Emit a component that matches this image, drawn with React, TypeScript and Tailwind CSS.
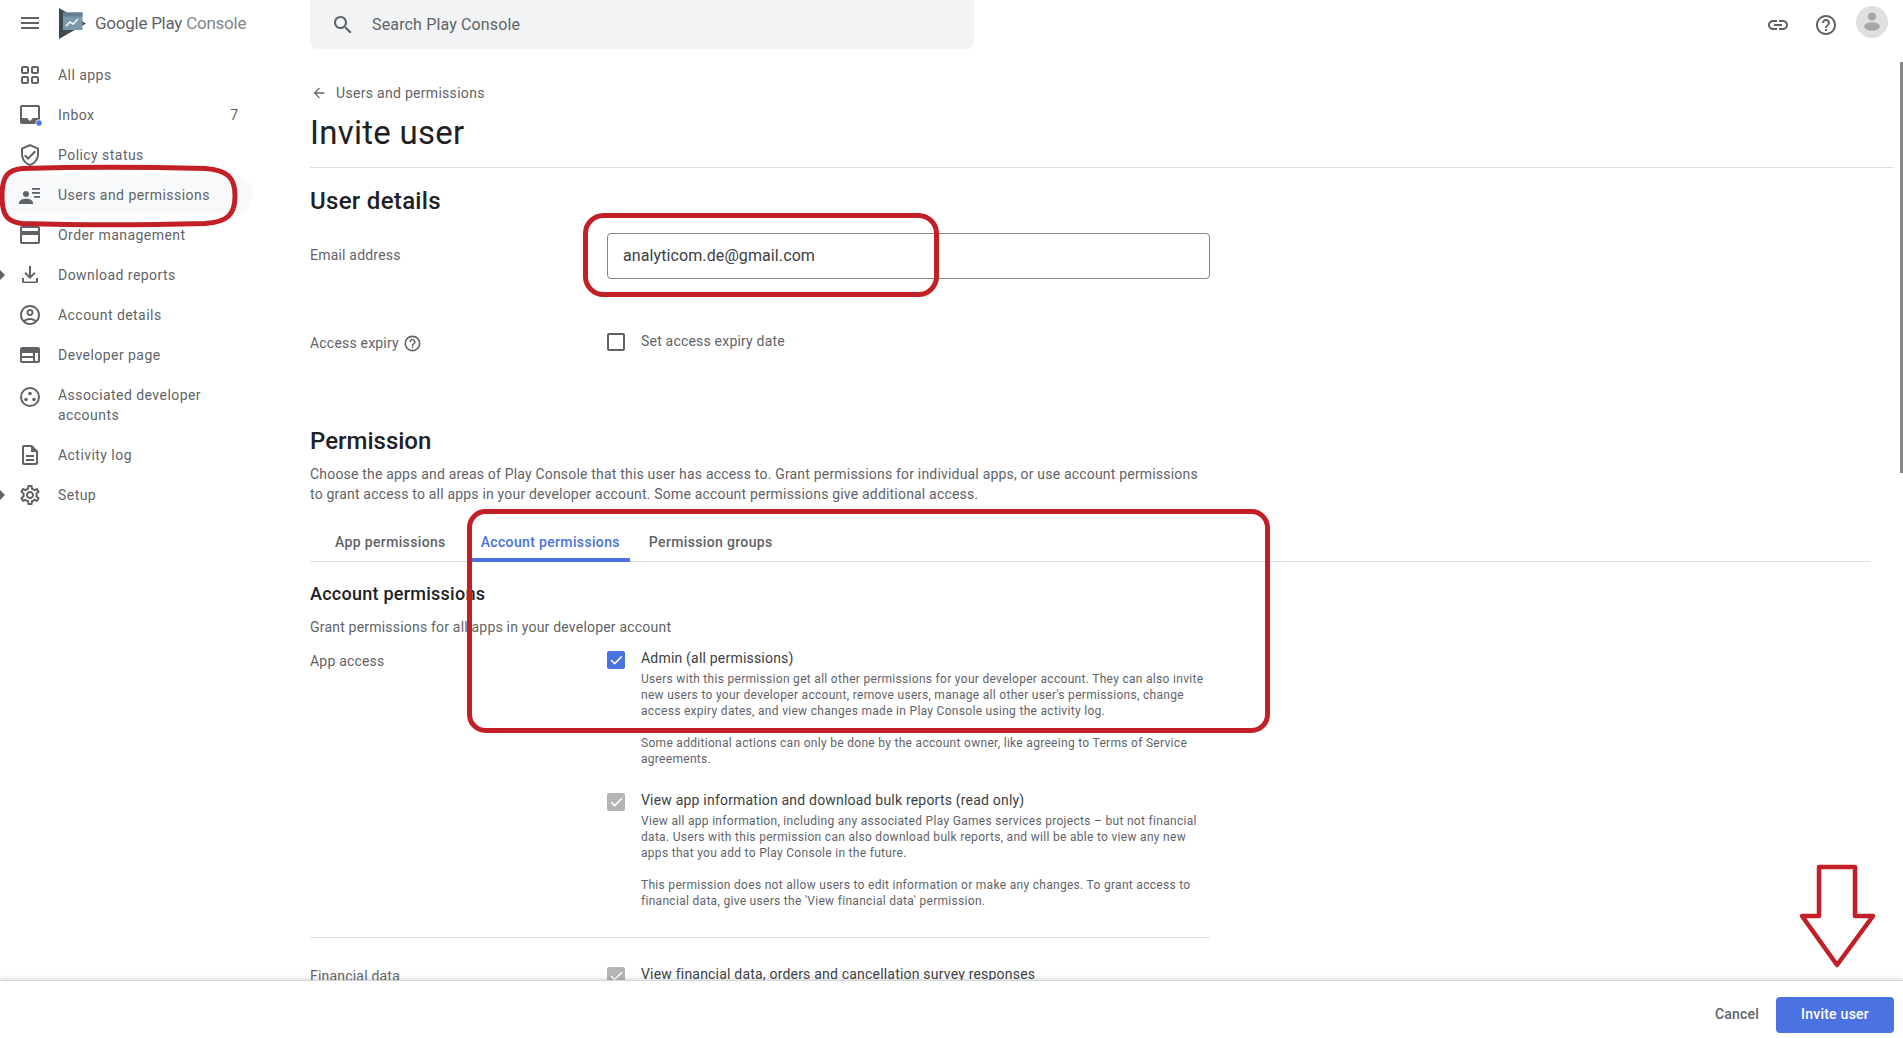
import React from "react";
import { Check } from "lucide-react";

interface NavItem {
  label: React.ReactNode;
  icon: React.ReactNode;
  badge?: string;
  active?: boolean;
  expand?: boolean;
  tall?: boolean;
}

const Icon: React.FC<{ d: string; className?: string }> = ({ d, className }) => (
  <svg viewBox="0 0 24 24" className={className ?? "size-6"} fill="currentColor" aria-hidden="true">
    <path d={d} fillRule="evenodd" />
  </svg>
);

const NAV: NavItem[] = [
  {
    label: "All apps",
    icon: (
      <svg viewBox="0 0 24 24" className="size-6" fill="none" stroke="currentColor" strokeWidth="2" aria-hidden="true">
        <rect x="4" y="4" width="6" height="6" rx="1" />
        <rect x="14" y="4" width="6" height="6" rx="1" />
        <rect x="4" y="14" width="6" height="6" rx="1" />
        <rect x="14" y="14" width="6" height="6" rx="1" />
      </svg>
    ),
  },
  {
    label: "Inbox",
    badge: "7",
    icon: (
      <svg viewBox="0 0 24 24" className="size-6" aria-hidden="true">
        <path fill="currentColor" fillRule="evenodd" d="M20 2H4a2 2 0 00-2 2v15a2 2 0 002 2h16a2 2 0 002-2V4a2 2 0 00-2-2zm0 2v11h-5l-3 3-3-3H4V4h16z" />
        <circle cx="21" cy="20" r="3.2" fill="#4a72e0" stroke="#fff" strokeWidth="0.8" />
      </svg>
    ),
  },
  {
    label: "Policy status",
    icon: <Icon d="M12 1L3 5v6c0 5.55 3.84 10.74 9 12 5.16-1.26 9-6.45 9-12V5l-9-4zm7 10c0 4.52-2.98 8.69-7 9.93-4.02-1.24-7-5.41-7-9.93V6.3l7-3.11 7 3.11V11zm-11.59.59L6 13l4 4 8-8-1.41-1.42L10 14.17z" />,
  },
  {
    label: "Users and permissions",
    active: true,
    icon: (
      <svg viewBox="0 0 24 24" className="size-6" fill="currentColor" aria-hidden="true">
        <circle cx="8" cy="11" r="3" />
        <path d="M1 20c0-2.8 3.6-4.2 7-4.2s7 1.4 7 4.2v1H1z" />
        <rect x="14" y="5" width="8" height="1.8" />
        <rect x="14" y="9" width="8" height="1.8" />
        <rect x="16" y="13" width="6" height="1.8" />
      </svg>
    ),
  },
  {
    label: "Order management",
    icon: <Icon d="M20 3H4c-1.11 0-1.99.89-1.99 2L2 19c0 1.11.89 2 2 2h16c1.11 0 2-.89 2-2V5c0-1.11-.89-2-2-2zm0 16H4v-7h16v7zm0-11H4V5h16v3z" />,
  },
  {
    label: "Download reports",
    expand: true,
    icon: <Icon d="M11 3h2v9.2l3.2-3.2 1.4 1.4L12 16l-5.6-5.6L7.8 9l3.2 3.2zM4 15h2v3.5h12V15h2v3.5A1.5 1.5 0 0118.5 20h-13A1.5 1.5 0 014 18.5z" />,
  },
  {
    label: "Account details",
    icon: <Icon d="M12 2C6.48 2 2 6.48 2 12s4.48 10 10 10 10-4.48 10-10S17.52 2 12 2zM7.35 18.5C8.66 17.56 10.26 17 12 17s3.34.56 4.65 1.5c-1.31.94-2.91 1.5-4.65 1.5s-3.34-.56-4.65-1.5zm10.79-1.38C16.45 15.8 14.32 15 12 15s-4.45.8-6.14 2.12C4.7 15.73 4 13.95 4 12c0-4.42 3.58-8 8-8s8 3.58 8 8c0 1.95-.7 3.73-1.86 5.12zM12 6c-1.93 0-3.5 1.57-3.5 3.5S10.07 13 12 13s3.5-1.57 3.5-3.5S13.93 6 12 6zm0 5c-.83 0-1.5-.67-1.5-1.5S11.17 8 12 8s1.5.67 1.5 1.5S12.83 11 12 11z" />,
  },
  {
    label: "Developer page",
    icon: <Icon d="M20 4H4a2 2 0 00-2 2v12a2 2 0 002 2h16a2 2 0 002-2V6a2 2 0 00-2-2zM4 10h11v3H4zm0 5h11v3H4zm13-5h3v8h-3z" />,
  },
  {
    label: "Associated developer accounts",
    tall: true,
    icon: (
      <svg viewBox="0 0 24 24" className="size-6" fill="currentColor" aria-hidden="true">
        <path fillRule="evenodd" d="M12 2a10 10 0 100 20 10 10 0 000-20zm0 18a8 8 0 110-16 8 8 0 010 16z" />
        <circle cx="12" cy="8.5" r="1.8" />
        <circle cx="8" cy="14.5" r="1.8" />
        <circle cx="16" cy="14.5" r="1.8" />
      </svg>
    ),
  },
  {
    label: "Activity log",
    icon: <Icon d="M8 16h8v2H8zm0-4h8v2H8zm6-10H6c-1.1 0-2 .9-2 2v16c0 1.1.89 2 1.99 2H18c1.1 0 2-.9 2-2V8l-6-6zm4 18H6V4h7v5h5v11z" />,
  },
  {
    label: "Setup",
    expand: true,
    icon: <Icon d="M19.43 12.98c.04-.32.07-.64.07-.98 0-.34-.03-.66-.07-.98l2.11-1.65c.19-.15.24-.42.12-.64l-2-3.46c-.09-.16-.26-.25-.44-.25-.06 0-.12.01-.17.03l-2.49 1c-.52-.4-1.08-.73-1.69-.98l-.38-2.65C14.46 2.18 14.25 2 14 2h-4c-.25 0-.46.18-.49.42l-.38 2.65c-.61.25-1.17.59-1.69.98l-2.49-1c-.06-.02-.12-.03-.18-.03-.17 0-.34.09-.43.25l-2 3.46c-.13.22-.07.49.12.64l2.11 1.65c-.04.32-.07.65-.07.98 0 .33.03.66.07.98l-2.11 1.65c-.19.15-.24.42-.12.64l2 3.46c.09.16.26.25.44.25.06 0 .12-.01.17-.03l2.49-1c.52.4 1.08.73 1.69.98l.38 2.65c.03.24.24.42.49.42h4c.25 0 .46-.18.49-.42l.38-2.65c.61-.25 1.17-.59 1.69-.98l2.49 1c.06.02.12.03.18.03.17 0 .34-.09.43-.25l2-3.46c.12-.22.07-.49-.12-.64l-2.11-1.65zm-1.98-1.71c.04.31.05.52.05.73 0 .21-.02.43-.05.73l-.14 1.13.89.7 1.08.84-.7 1.21-1.27-.51-1.04-.42-.9.68c-.43.32-.84.56-1.25.73l-1.06.43-.16 1.13-.2 1.35h-1.4l-.19-1.35-.16-1.13-1.06-.43c-.43-.18-.83-.41-1.23-.71l-.91-.7-1.06.43-1.27.51-.7-1.21 1.08-.84.89-.7-.14-1.13c-.03-.31-.05-.54-.05-.74s.02-.43.05-.73l.14-1.13-.89-.7-1.08-.84.7-1.21 1.27.51 1.04.42.9-.68c.43-.32.84-.56 1.25-.73l1.06-.43.16-1.13.2-1.35h1.39l.19 1.35.16 1.13 1.06.43c.43.18.83.41 1.23.71l.91.7 1.06-.43 1.27-.51.7 1.21-1.07.85-.89.7.14 1.13zM12 8c-2.21 0-4 1.79-4 4s1.79 4 4 4 4-1.79 4-4-1.79-4-4-4zm0 6c-1.1 0-2-.9-2-2s.9-2 2-2 2 .9 2 2-.9 2-2 2z" />,
  },
];

const Checkbox: React.FC<{ state?: "on" | "off" | "disabled" }> = ({ state = "off" }) => {
  if (state === "off") {
    return <span className="block size-[18px] shrink-0 rounded-[2px] border-2 border-[#5f6368]" />;
  }
  return (
    <span
      className={
        state === "on"
          ? "flex size-[18px] shrink-0 items-center justify-center rounded-[2px] bg-[#4a72e0] text-white"
          : "flex size-[18px] shrink-0 items-center justify-center rounded-[2px] bg-[#b4b5b6] text-white"
      }
    >
      <Check size={15} strokeWidth={2.5} />
    </span>
  );
};

const Sidebar: React.FC = () => (
  <aside className="flex w-[310px] shrink-0 flex-col text-[#5f6368]">
    <div className="flex h-[55px] items-start">
      <div className="ml-[18px] mt-[11px] text-[#5f6368]">
        <Icon d="M3 18h18v-2H3v2zm0-5h18v-2H3v2zm0-7v2h18V6H3z" />
      </div>
      <svg viewBox="0 0 28 31" className="ml-[17px] mt-[8px] h-[31px] w-[28px]" aria-hidden="true">
        <path d="M0 0l27 15.5L0 31z" fill="#3c4a54" />
        <path d="M4 4.5h19.5v17.5H4z" fill="#7d98a8" />
        <path d="M4 4.5h19.5v4H4z" fill="#5f7e8f" />
        <path d="M7 18l4-4 3 2 5-5" fill="none" stroke="#fff" strokeWidth="1.4" />
      </svg>
      <div className="ml-[8px] mt-[12px] whitespace-nowrap text-[17px] leading-[22px] tracking-[-0.25px] text-[#5f6368]">
        Google Play <span className="text-[#80868b]">Console</span>
      </div>
    </div>
    <nav className="flex flex-col">
      {NAV.map((item, i) => (
        <div
          key={i}
          className={`relative flex w-[253px] rounded-r-full pl-[18px] pr-[15px] ${item.tall ? "h-[60px] items-start pt-[10px]" : "h-10 items-center"} ${item.active ? "bg-[#f8f9fa]" : ""}`}
        >
          {item.expand && (
            <span className="absolute left-0 top-[15px] h-0 w-0 border-y-[5px] border-l-[5px] border-y-transparent border-l-[#5f6368]" />
          )}
          <span className="shrink-0">{item.icon}</span>
          <span className="ml-4 flex-1 text-[14px] leading-5 tracking-[0.45px]">{item.label}</span>
          {item.badge && <span className="text-[14px]">{item.badge}</span>}
        </div>
      ))}
    </nav>
  </aside>
);

const TopBar: React.FC = () => (
  <div className="flex h-[49px] shrink-0 items-center justify-between pr-[15px]">
    <div className="flex h-[49px] w-[664px] items-center rounded-b-lg bg-[#f1f3f4] pl-[21px] text-[#5f6368]">
      <Icon d="M15.5 14h-.79l-.28-.27C15.41 12.59 16 11.11 16 9.5 16 5.91 13.09 3 9.5 3S3 5.91 3 9.5 5.91 16 9.5 16c1.61 0 3.09-.59 4.23-1.57l.27.28v.79l5 4.99L20.49 19l-4.99-5zm-6 0C7.01 14 5 11.99 5 9.5S7.01 5 9.5 5 14 7.01 14 9.5 11.99 14 9.5 14z" />
      <span className="ml-[17px] text-[16px] tracking-[0.15px] text-[#5f6368]">Search Play Console</span>
    </div>
    <div className="flex items-center text-[#5f6368]">
      <Icon d="M3.9 12c0-1.71 1.39-3.1 3.1-3.1h4V7H7c-2.76 0-5 2.24-5 5s2.24 5 5 5h4v-1.9H7c-1.71 0-3.1-1.39-3.1-3.1zM8 13h8v-2H8v2zm9-6h-4v1.9h4c1.71 0 3.1 1.39 3.1 3.1s-1.39 3.1-3.1 3.1h-4V17h4c2.76 0 5-2.24 5-5s-2.24-5-5-5z" />
      <div className="ml-6">
        <Icon d="M11 18h2v-2h-2v2zm1-16C6.48 2 2 6.48 2 12s4.48 10 10 10 10-4.48 10-10S17.52 2 12 2zm0 18c-4.41 0-8-3.59-8-8s3.59-8 8-8 8 3.59 8 8-3.59 8-8 8zm0-14c-2.21 0-4 1.79-4 4h2c0-1.1.9-2 2-2s2 .9 2 2c0 2-3 1.75-3 5h2c0-2.25 3-2.5 3-5 0-2.21-1.79-4-4-4z" />
      </div>
      <div className="mb-[5px] ml-[18px] flex size-8 items-center justify-center rounded-full bg-[#e0e0e0]">
        <svg viewBox="0 0 32 32" className="size-8" fill="#a6a6a6" aria-hidden="true">
          <circle cx="16" cy="10.5" r="4" />
          <ellipse cx="16" cy="20.5" rx="8" ry="4.2" />
        </svg>
      </div>
    </div>
  </div>
);

const Permission: React.FC<{ title: string; state: "on" | "disabled"; children?: React.ReactNode }> = ({ title, state, children }) => (
  <div className="flex">
    <div className="mt-[3px]">
      <Checkbox state={state} />
    </div>
    <div className="ml-4 w-[572px]">
      <div className="text-[14px] leading-5 tracking-[0.2px] text-[#3c4043]">{title}</div>
      <div className="mt-[3px] text-[12px] leading-4 tracking-[0.3px] text-[#5f6368]">{children}</div>
    </div>
  </div>
);

const Annotations: React.FC = () => (
  <svg className="pointer-events-none absolute inset-0 h-full w-full" viewBox="0 0 1903 1038" fill="none" stroke="#c22026" strokeWidth="5" aria-hidden="true">
    <path d="M22 168.5 C70 167 150 167 205 168.5 C228 170 235 178 235 196 C235 214 228 222 205 223.5 C150 225 70 225 22 223.5 C8 222 2 216 2 196 C2 176 8 170 22 168.5z" />
    <rect x="585.5" y="215.5" width="351" height="79" rx="18" />
    <rect x="469.5" y="511.5" width="798" height="219" rx="16" />
    <path d="M1819 867h36v49h18l-36 49-35-49h17z" strokeWidth="4.5" strokeLinejoin="round" />
  </svg>
);

const App: React.FC = () => (
  <div className="relative flex h-screen w-full overflow-hidden bg-white font-['Roboto',sans-serif]">
    <Sidebar />
    <div className="flex min-w-0 flex-1 flex-col">
      <TopBar />
      <main className="min-h-0 flex-1 overflow-hidden pr-[10px]">
        <div className="mt-[34px] flex h-5 items-center text-[14px] tracking-[0.3px] text-[#5f6368]">
          <div className="mr-[9px] ml-[1px]">
            <Icon d="M20 11H7.83l5.59-5.59L12 4l-8 8 8 8 1.41-1.41L7.83 13H20v-2z" className="size-4" />
          </div>
          Users and permissions
        </div>
        <h1 className="mt-[10px] text-[33px] leading-10 tracking-[0.25px] text-[#202124]">Invite user</h1>
        <div className="mt-[14px] border-t border-[#dadce0]" />
        <h2 className="mt-[18px] text-[24px] font-medium leading-[30px] tracking-[0.3px] text-[#202124]">User details</h2>

        <div className="mt-[17px] grid w-[900px] grid-cols-[297px_1fr]">
          <div className="mt-[12px] text-[14px] leading-5 tracking-[0.2px] text-[#5f6368]">Email address</div>
          <div className="flex h-[46px] items-center rounded border border-[#80868b] pl-[15px] text-[16px] tracking-[0.1px] text-[#3c4043]">analyticom.de@gmail.com</div>
        </div>

        <div className="mt-[51px] grid w-[900px] grid-cols-[297px_1fr]">
          <div className="mt-[3px] flex items-center text-[14px] leading-5 tracking-[0.2px] text-[#5f6368]">
            Access expiry
            <div className="ml-[4px] mt-[1px]">
              <Icon d="M11 18h2v-2h-2v2zm1-16C6.48 2 2 6.48 2 12s4.48 10 10 10 10-4.48 10-10S17.52 2 12 2zm0 18c-4.41 0-8-3.59-8-8s3.59-8 8-8 8 3.59 8 8-3.59 8-8 8zm0-14c-2.21 0-4 1.79-4 4h2c0-1.1.9-2 2-2s2 .9 2 2c0 2-3 1.75-3 5h2c0-2.25 3-2.5 3-5 0-2.21-1.79-4-4-4z" className="size-[19px]" />
            </div>
          </div>
          <div className="flex items-start">
            <div className="mt-[3px]">
              <Checkbox />
            </div>
            <span className="ml-[16px] translate-y-[1px] text-[14px] leading-5 tracking-[0.2px] text-[#5f6368]">Set access expiry date</span>
          </div>
        </div>

        <h2 className="mt-[73px] text-[24px] font-medium leading-[30px] text-[#202124]">Permission</h2>
        <p className="mt-[8px] w-[900px] text-[14px] leading-5 tracking-[0.19px] text-[#5f6368]">
          Choose the apps and areas of Play Console that this user has access to. Grant permissions for individual apps, or use account permissions to grant access to all apps in your developer account. Some account permissions give additional access.
        </p>

        <div className="mt-[18px] flex h-[40px] w-[1560px] border-b border-[#dadce0] text-[14px] font-medium tracking-[0.35px]">
          <div className="ml-[15px] flex h-[39px] items-center px-[10px] pt-[2px] text-[#5f6368]">App permissions</div>
          <div className="ml-[15px] flex h-[40px] items-center border-b-[4px] border-[#4a72e0] px-[10px] pt-[5px] text-[#4a72e0]">Account permissions</div>
          <div className="ml-[9px] flex h-[39px] items-center px-[10px] pt-[2px] text-[#5f6368]">Permission groups</div>
        </div>

        <h3 className="mt-[20px] text-[18px] font-medium leading-6 tracking-[0.25px] text-[#202124]">Account permissions</h3>
        <p className="mt-[11px] text-[14px] leading-5 tracking-[0.2px] text-[#5f6368]">Grant permissions for all apps in your developer account</p>

        <div className="mt-[11px] grid w-[900px] grid-cols-[297px_1fr]">
          <div className="mt-[3px] text-[14px] leading-5 tracking-[0.2px] text-[#5f6368]">App access</div>
          <div className="flex flex-col">
            <Permission title="Admin (all permissions)" state="on">
              Users with this permission get all other permissions for your developer account. They can also invite new users to your developer account, remove users, manage all other user's permissions, change access expiry dates, and view changes made in Play Console using the activity log.
              <p className="mt-[16px]">Some additional actions can only be done by the account owner, like agreeing to Terms of Service agreements.</p>
            </Permission>
            <div className="mt-[23px]">
              <Permission title="View app information and download bulk reports (read only)" state="disabled">
                View all app information, including any associated Play Games services projects – but not financial data. Users with this permission can also download bulk reports, and will be able to view any new apps that you add to Play Console in the future.
                <p className="mt-[16px]">This permission does not allow users to edit information or make any changes. To grant access to financial data, give users the 'View financial data' permission.</p>
              </Permission>
            </div>
          </div>
        </div>

        <div className="mt-[28px] w-[900px] border-t border-[#dadce0]" />

        <div className="mt-[26px] grid w-[900px] grid-cols-[297px_1fr]">
          <div className="mt-[2px] text-[14px] leading-5 tracking-[0.2px] text-[#5f6368]">Financial data</div>
          <Permission title="View financial data, orders and cancellation survey responses" state="disabled" />
        </div>
      </main>
      <footer className="relative -ml-[310px] flex h-[58px] shrink-0 items-center justify-end border-t border-[#d4d5d6] bg-white pr-[9px] pt-[10px] shadow-[0_-2px_4px_rgba(60,64,67,0.15)]">
        <span className="mr-[17px] text-[14px] font-medium tracking-[0.2px] text-[#5f6368]">Cancel</span>
        <button type="button" className="h-9 w-[118px] rounded bg-[#4a72e0] text-[14px] font-medium tracking-[0.25px] text-white">Invite user</button>
      </footer>
    </div>
    <div className="absolute right-0 top-[62px] h-[411px] w-[3px] bg-[#85878a]" />
    <Annotations />
  </div>
);

export default App;
